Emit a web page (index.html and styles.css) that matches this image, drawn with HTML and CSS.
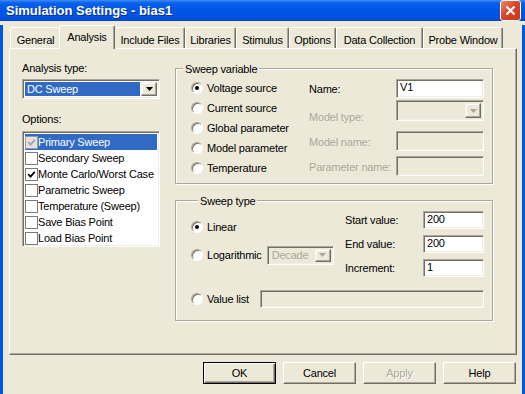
FILE: index.html
```html
<!DOCTYPE html>
<html lang="en">
<head>
  <meta charset="UTF-8" />
  <title>Simulation Settings - bias1</title>
  <link rel="stylesheet" href="styles.css">
</head>
<body>
  <div class="window">
    <div class="titlebar">
      <span class="title">Simulation Settings - bias1</span>
      <span class="close">
        <svg width="13" height="13" viewBox="0 0 13 13"><path d="M2.5 2.5 L10.5 10.5 M10.5 2.5 L2.5 10.5" stroke="#fff" stroke-width="2.2"/></svg>
      </span>
    </div>

    <div class="client">
      <div class="tabs">
        <div class="tab t-general">General</div>
        <div class="tab active t-analysis">Analysis</div>
        <div class="tab t-include">Include Files</div>
        <div class="tab t-libraries">Libraries</div>
        <div class="tab t-stimulus">Stimulus</div>
        <div class="tab t-options">Options</div>
        <div class="tab t-data">Data Collection</div>
        <div class="tab t-probe">Probe Window</div>
      </div>

      <div class="panel">
        <div class="left">
          <div class="label">Analysis type:</div>
          <div class="combo analysis-combo">
            <span class="combo-text selected">DC Sweep</span>
            <span class="drop"><svg width="7" height="4" viewBox="0 0 7 4"><path d="M0 0 H7 L3.5 4 Z" fill="#000"/></svg></span>
          </div>
          <div class="label options-label">Options:</div>
          <ul class="listbox">
            <li class="item selected"><span class="check grey"><svg width="9" height="9" viewBox="0 0 9 9"><path d="M1.2 4.2 L3.5 6.6 L7.8 1.8" stroke="#a79fb8" stroke-width="1.8" fill="none"/></svg></span>Primary Sweep</li>
            <li class="item"><span class="check"></span>Secondary Sweep</li>
            <li class="item"><span class="check"><svg width="9" height="9" viewBox="0 0 9 9"><path d="M1.2 4.2 L3.5 6.6 L7.8 1.8" stroke="#000" stroke-width="1.8" fill="none"/></svg></span>Monte Carlo/Worst Case</li>
            <li class="item"><span class="check"></span>Parametric Sweep</li>
            <li class="item"><span class="check"></span>Temperature (Sweep)</li>
            <li class="item"><span class="check"></span>Save Bias Point</li>
            <li class="item"><span class="check"></span>Load Bias Point</li>
          </ul>
        </div>

        <div class="right">
          <div class="group group-var">
            <div class="legend">Sweep variable</div>
            <div class="group-body">
              <div class="radios">
                <div class="opt"><span class="radio on"></span>Voltage source</div>
                <div class="opt"><span class="radio"></span>Current source</div>
                <div class="opt"><span class="radio"></span>Global parameter</div>
                <div class="opt"><span class="radio"></span>Model parameter</div>
                <div class="opt"><span class="radio"></span>Temperature</div>
              </div>
              <div class="fields">
                <div class="field f-name"><span class="flabel">Name:</span><span class="edit">V1</span></div>
                <div class="field f-type"><span class="flabel dim">Model type:</span>
                  <span class="combo dis model-combo"><span class="combo-text"></span><span class="drop"><svg width="7" height="4" viewBox="0 0 7 4"><path d="M0 0 H7 L3.5 4 Z" fill="#aca899"/></svg></span></span>
                </div>
                <div class="field f-mname"><span class="flabel dim">Model name:</span><span class="edit dis"></span></div>
                <div class="field f-pname"><span class="flabel dim">Parameter name:</span><span class="edit dis"></span></div>
              </div>
            </div>
          </div>

          <div class="group group-type">
            <div class="legend">Sweep type</div>
            <div class="type-top">
              <div class="type-radios">
                <div class="opt linear"><span class="radio on"></span>Linear</div>
                <div class="opt log"><span class="radio"></span>Logarithmic
                  <span class="combo dis decade-combo"><span class="combo-text">Decade</span><span class="drop"><svg width="7" height="4" viewBox="0 0 7 4"><path d="M0 0 H7 L3.5 4 Z" fill="#aca899"/></svg></span></span>
                </div>
              </div>
              <div class="range">
                <div class="rfield"><span class="rlabel">Start value:</span><span class="edit small">200</span></div>
                <div class="rfield"><span class="rlabel">End value:</span><span class="edit small">200</span></div>
                <div class="rfield"><span class="rlabel">Increment:</span><span class="edit small">1</span></div>
              </div>
            </div>
            <div class="opt valuelist"><span class="radio"></span>Value list<span class="edit dis wide"></span></div>
          </div>
        </div>
      </div>

      <div class="buttons">
        <button class="btn default">OK</button>
        <button class="btn">Cancel</button>
        <button class="btn disabled">Apply</button>
        <button class="btn">Help</button>
      </div>
    </div>
  </div>
</body>
</html>
```

FILE: styles.css
```css
body {
  margin: 0;
  font-family: "Liberation Sans", Arial, sans-serif;
  font-size: 11px;
  letter-spacing: -0.2px;
  color: #000;
  background: #ece9d8;
}
.window {
  width: 525px;
  height: 394px;
  overflow: hidden;
}
.titlebar {
  height: 21px;
  display: flex;
  align-items: center;
  justify-content: space-between;
  background: linear-gradient(#3d8cf5 0, #0a5fea 3px, #0055e5 50%, #0051e0 85%, #0046cc 100%);
  padding: 0 4px 0 6px;
}
.title {
  color: #fff;
  font-family: "Liberation Sans Narrow", "Liberation Sans", Arial, sans-serif;
  font-weight: bold;
  font-size: 13px;
  letter-spacing: 0;
  text-shadow: 1px 1px 0 #0a2f8a;
}
.close {
  width: 19px;
  height: 19px;
  border: 1px solid #fff;
  border-radius: 3px;
  background: linear-gradient(135deg, #e98a6c, #d9462a 45%, #c6361a);
  display: flex;
  align-items: center;
  justify-content: center;
}
.client {
  height: 373px;
  box-sizing: border-box;
  border-left: 3px solid #0055e5;
  border-right: 3px solid #0055e5;
  border-bottom: 3px solid #0046cc;
  background: #ece9d8;
}

/* tabs */
.tabs {
  display: flex;
  align-items: flex-end;
  height: 23px;
  margin: 4px 0 0 7px;
}
.tab {
  box-sizing: border-box;
  height: 21px;
  padding-top: 5px;
  line-height: 14px;
  text-align: center;
  border-top: 1px solid #fff;
  border-left: 1px solid #fff;
  border-right: 1px solid #716f64;
  box-shadow: inset -1px 0 0 #aca899;
  border-radius: 2px 2px 0 0;
}
.tab.active {
  height: 24px;
  margin-bottom: -1px;
  padding-top: 4px;
  position: relative;
  z-index: 1;
  background: #ece9d8;
}
.t-general { width: 49px; padding-left: 1px; border-right: none; box-shadow: none; }
.t-analysis { width: 56px; }
.t-include { width: 70px; border-left-color: #ece9d8; }
.t-libraries { width: 51px; }
.t-stimulus { width: 53px; }
.t-options { width: 47px; }
.t-data { width: 87px; }
.t-probe { width: 80px; }

.panel {
  width: 508px;
  height: 307px;
  margin-left: 6px;
  box-sizing: border-box;
  border-top: 1px solid #fff;
  border-left: 1px solid #fff;
  border-right: 1px solid #716f64;
  border-bottom: 1px solid #716f64;
  box-shadow: inset -1px -1px 0 #aca899;
  display: flex;
  padding-left: 12px;
}

/* left column */
.left {
  width: 138px;
  padding-top: 12px;
}
.label {
  line-height: 14px;
}
.options-label {
  margin-top: 13px;
}
.combo,
.listbox,
.edit {
  box-sizing: border-box;
  background: #fff;
  border: 1px solid;
  border-color: #aca899 #fff #fff #aca899;
  box-shadow: inset 1px 1px 0 #716f64, inset -1px -1px 0 #f1efe2;
}
.combo {
  display: flex;
  height: 20px;
  padding: 2px;
}
.analysis-combo {
  margin-top: 4px;
  width: 138px;
}
.combo-text {
  flex: 1;
  line-height: 15px;
  padding-left: 2px;
}
.combo-text.selected {
  background: #316ac5;
  color: #fff;
  margin-right: 1px;
}
.drop {
  width: 16px;
  box-sizing: border-box;
  background: #ece9d8;
  border: 1px solid;
  border-color: #f1efe2 #716f64 #716f64 #f1efe2;
  box-shadow: inset -1px -1px 0 #aca899, inset 1px 1px 0 #fff;
  display: flex;
  align-items: center;
  justify-content: center;
}
.combo.dis {
  background: #ece9d8;
}
.combo.dis .combo-text {
  color: #aca899;
}
.listbox {
  list-style: none;
  margin: 5px 0 0;
  padding: 2px;
  width: 138px;
  height: 116px;
}
.item {
  height: 16px;
  display: flex;
  align-items: center;
  line-height: 16px;
  white-space: nowrap;
}
.item.selected {
  background: #316ac5;
  color: #fff;
}
.check {
  width: 13px;
  height: 13px;
  box-sizing: border-box;
  background: #fff;
  border: 1px solid #7a7a7a;
  display: flex;
  align-items: center;
  justify-content: center;
}
.check.grey {
  background: #e4e2da;
  border-color: #9a98a0;
}

/* right column */
.right {
  width: 318px;
  margin-left: 15px;
}
.group {
  box-sizing: border-box;
  border: 1px solid #aca899;
  box-shadow: inset 1px 1px 0 #fff, 1px 1px 0 #fff;
}
.legend {
  display: table;
  height: 14px;
  line-height: 14px;
  margin: -7px 0 0 7px;
  padding: 0 2px;
  background: #ece9d8;
}
.group-var {
  margin-top: 19px;
  height: 116px;
}
.group-body {
  display: flex;
  padding-left: 15px;
}
.radios {
  width: 118px;
  padding-top: 2px;
}
.opt {
  display: flex;
  align-items: center;
  height: 20px;
  white-space: nowrap;
}
.radio {
  width: 12px;
  height: 12px;
  flex-shrink: 0;
  box-sizing: border-box;
  border-radius: 50%;
  background: #fff;
  border: 1px solid;
  border-color: #aca899 #fff #fff #aca899;
  box-shadow: inset 1px 1px 0 #716f64;
  margin-right: 4px;
  display: flex;
  align-items: center;
  justify-content: center;
}
.radio.on::after {
  content: "";
  width: 4px;
  height: 4px;
  border-radius: 50%;
  background: #000;
}
.fields {
  width: 175px;
  padding-top: 3px;
}
.field {
  display: flex;
  align-items: flex-start;
}
.flabel {
  width: 87px;
  line-height: 14px;
  white-space: nowrap;
}
.dim {
  color: #aca899;
}
.field .edit,
.field .combo {
  width: 88px;
}
.f-name .flabel {
  margin-top: 3px;
}
.f-name .edit {
  height: 19px;
  line-height: 15px;
  padding-left: 3px;
}
.f-type {
  margin-top: 2px;
}
.f-type .flabel {
  margin-top: 10px;
}
.model-combo {
  height: 21px;
}
.f-mname {
  margin-top: 7px;
}
.f-mname .flabel,
.f-pname .flabel {
  margin-top: 4px;
}
.f-mname .edit,
.f-pname .edit {
  height: 20px;
}
.f-pname {
  margin-top: 5px;
}
.edit.dis {
  background: #ece9d8;
}

.group-type {
  margin-top: 16px;
  height: 121px;
  padding-left: 15px;
}
.type-top {
  display: flex;
  height: 69px;
}
.type-radios {
  width: 154px;
  padding-top: 9px;
}
.log {
  margin-top: 8px;
}
.decade-combo {
  width: 67px;
  height: 19px;
  margin-left: 5px;
  padding: 2px;
}
.decade-combo .combo-text {
  line-height: 13px;
}
.range {
  padding-top: 3px;
}
.rfield {
  display: flex;
  align-items: center;
  height: 18px;
  margin-bottom: 6px;
}
.rlabel {
  width: 78px;
}
.edit.small {
  width: 61px;
  height: 18px;
  line-height: 14px;
  padding-left: 3px;
}
.valuelist {
  margin-top: 13px;
  height: 18px;
}
.edit.wide {
  flex: 1;
  height: 18px;
  margin: 0 8px 0 11px;
}

/* bottom buttons */
.buttons {
  display: flex;
  justify-content: flex-end;
  gap: 7px;
  margin-top: 7px;
  padding-right: 6px;
}
.btn {
  width: 73px;
  height: 22px;
  box-sizing: border-box;
  font-family: "Liberation Sans", Arial, sans-serif;
  font-size: 11px;
  letter-spacing: -0.2px;
  background: #ece9d8;
  border: 1px solid;
  border-color: #fff #716f64 #716f64 #fff;
  box-shadow: inset -1px -1px 0 #aca899;
  padding: 0;
}
.btn.default {
  border: 1px solid #000;
  box-shadow: inset 1px 1px 0 #fff, inset -1px -1px 0 #716f64, inset -2px -2px 0 #aca899;
}
.btn.disabled {
  color: #aca899;
  text-shadow: 1px 1px 0 #fff;
}
```
